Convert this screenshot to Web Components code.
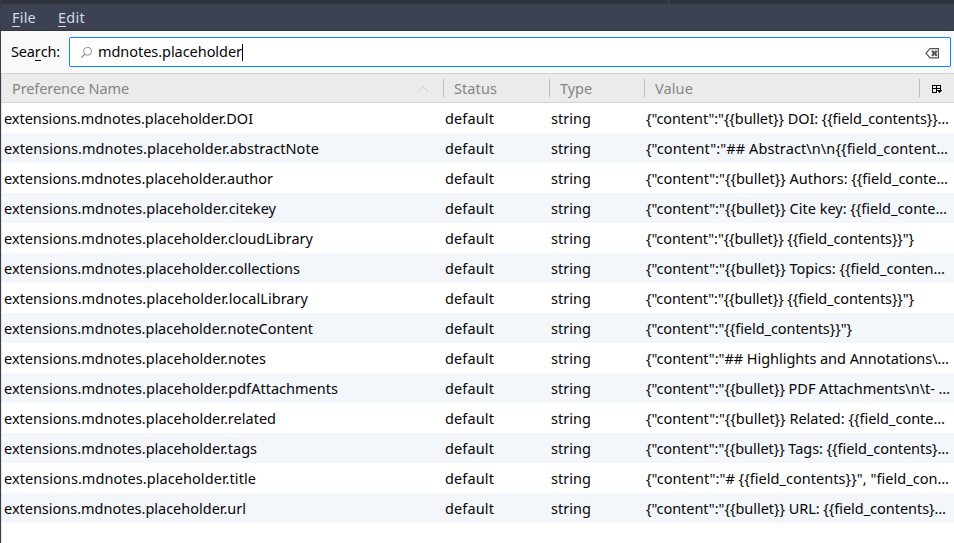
<!DOCTYPE html>
<html lang="en"><head><meta charset="utf-8"><title>Preferences</title>
<style>
html,body{margin:0;height:100%;overflow:hidden;background:#fff}
body{font:14.5px/30px "Noto Sans","Open Sans",sans-serif;color:#050505}
</style></head><body>
<config-window></config-window>
<script>
// Text run whose letter spacing is adjusted so that it spans the given width.
customElements.define('fit-text', class extends HTMLElement {
  connectedCallback() {
    const root = this.attachShadow({mode: 'open'});
    root.innerHTML = `<style>:host{display:block;white-space:pre;overflow:visible}span{display:inline-block}</style><span><slot></slot></span>`;
    const span = root.querySelector('span');
    const want = +this.getAttribute('width');
    const spacing = (want - span.getBoundingClientRect().width) / this.textContent.length;
    span.style.letterSpacing = spacing + 'px';
  }
});

customElements.define('menu-bar', class extends HTMLElement {
  connectedCallback() {
    this.attachShadow({mode: 'open'}).innerHTML = `<style>
      :host{display:flex;box-sizing:border-box;height:31px;border-top:4px solid #2f343f;border-bottom:1px solid #343947;background:#3c4252;color:#d3dae3;padding-left:11px;gap:22px;line-height:27px;position:relative}
      u{text-decoration:none;box-shadow:0 1px #d3dae3;display:inline-block;line-height:17px}
      i{position:absolute;left:667px;top:-4px;width:1px;height:4px;background:#454b59}
      </style><i></i><fit-text width="24"><u>F</u>ile</fit-text><fit-text width="27"><u>E</u>dit</fit-text>`;
  }
});

customElements.define('search-bar', class extends HTMLElement {
  connectedCallback() {
    this.attachShadow({mode: 'open'}).innerHTML = `<style>
      :host{display:flex;box-sizing:border-box;height:42px;padding:6px 3px 6px 10px;background:#f9f9fa;color:#050505;line-height:28px}
      u{text-decoration:none;box-shadow:0 1px #101010;display:inline-block;line-height:17px}
      .label{width:58px}
      .box{flex:1;display:flex;align-items:center;box-sizing:border-box;height:30px;border:1px solid #0a84ff;border-radius:2px;background:#fff;line-height:26px;padding:0 10px 0 10px}
      .box fit-text{height:28px}
      .find{margin-right:5px}
      .caret{width:1px;height:17px;background:#000}
      .clear{margin-left:auto;position:relative;top:1px}
      svg{display:block;flex:none}
      </style><fit-text class="label" width="49">Sea<u>r</u>ch:</fit-text>
      <div class="box"><svg class="find" width="13" height="13" viewBox="0 0 13 13" fill="none" stroke="#8b8b8b"><circle cx="7.6" cy="5.3" r="4" stroke-width="1"/><path d="M4.7 8.2 1.3 11.6" stroke-width="1.3"/></svg>
      <fit-text width="144">mdnotes.placeholder</fit-text><span class="caret"></span>
      <svg class="clear" width="15" height="11" viewBox="0 0 15 11" fill="none" stroke="#555"><path d="M5 .7h8.4v9.2H5L1 5.3z" stroke-width="1.2"/><path d="m7 2.9 4.8 4.8m0-4.8L7 7.7" stroke-width="2.2"/></svg></div>`;
  }
});

customElements.define('tree-header', class extends HTMLElement {
  connectedCallback() {
    this.attachShadow({mode: 'open'}).innerHTML = `<style>
      :host{display:grid;grid-template-columns:441px 106px 95px 275px 1fr;box-sizing:border-box;height:30px;border:solid #d5d5d8;border-width:1px 0 1px 1px;background:#ebebeb;color:#858585;line-height:29px}
      div{display:flex;align-items:center;padding-left:11px;position:relative}
      div:first-of-type{padding-left:10px;padding-right:14px;justify-content:space-between}
      div+div::before{content:"";position:absolute;left:0;top:5px;height:18px;width:1px;background:#bebebe}
      svg{display:block}
      </style>
      <div><fit-text width="117">Preference Name</fit-text><svg width="12" height="8" viewBox="0 0 12 8" fill="none" stroke="#d3dae6" stroke-width="1.7"><path d="M1 6.5 6 1.5l5 5"/></svg></div>
      <div><fit-text width="43">Status</fit-text></div>
      <div><fit-text width="32">Type</fit-text></div>
      <div><fit-text width="38">Value</fit-text></div>
      <div style="padding-left:13px"><svg width="11" height="10" viewBox="0 0 11 10" fill="#000" shape-rendering="crispEdges"><path d="M0 1h9v1H0zM0 2h1v6H0zM4 2h1v6H4zM8 2h1v4H8zM0 4h9v1H0zM0 8h5v1H0zM5 6h5v1H5zM6 7h3v1H6zM7 8h1v1H7z"/></svg></div>`;
  }
});

customElements.define('pref-row', class extends HTMLElement {
  connectedCallback() {
    this.attachShadow({mode: 'open'}).innerHTML = `<style>
      :host{display:grid;grid-template-columns:441px 106px 95px 1fr;height:30px;line-height:31px;overflow:hidden}
      :host([odd]){background:#f3f6fb}
      </style><slot name="name"></slot><fit-text width="49">default</fit-text><fit-text width="40">string</fit-text><slot name="value"></slot>`;
  }
});

const prefs = [
  ['DOI', 249, '{"content":"{{bullet}} DOI: {{field_contents}}…', 303],
  ['abstractNote', 315, '{"content":"## Abstract\\n\\n{{field_content…', 302],
  ['author', 269, '{"content":"{{bullet}} Authors: {{field_conte…', 302],
  ['citekey', 272, '{"content":"{{bullet}} Cite key: {{field_conte…', 301],
  ['cloudLibrary', 309, '{"content":"{{bullet}} {{field_contents}}"}', 268],
  ['collections', 296, '{"content":"{{bullet}} Topics: {{field_conten…', 299],
  ['localLibrary', 304, '{"content":"{{bullet}} {{field_contents}}"}', 268],
  ['noteContent', 309, '{"content":"{{field_contents}}"}', 206],
  ['notes', 262, '{"content":"## Highlights and Annotations\\…', 303],
  ['pdfAttachments', 334, '{"content":"{{bullet}} PDF Attachments\\n\\t- …', 304],
  ['related', 272, '{"content":"{{bullet}} Related: {{field_conte…', 299],
  ['tags', 253, '{"content":"{{bullet}} Tags: {{field_contents}…', 303],
  ['title', 252, '{"content":"# {{field_contents}}", "field_con…', 303],
  ['url', 242, '{"content":"{{bullet}} URL: {{field_contents}…', 300]
];

customElements.define('config-window', class extends HTMLElement {
  connectedCallback() {
    this.attachShadow({mode: 'open'}).innerHTML = `<style>
      :host{display:block;box-sizing:border-box;width:954px;height:543px;border-left:1px solid #383e4e;background:#fff}
      .rows{border-left:1px solid #e4e4e8;height:440px}
      .rows pref-row{padding-left:2px}
      </style><menu-bar></menu-bar><search-bar></search-bar><tree-header></tree-header>
      <div class="rows">${prefs.map(([n, w, v, vw], i) => `<pref-row ${i % 2 ? 'odd' : ''}><fit-text slot="name" width="${w}">extensions.mdnotes.placeholder.${n}</fit-text><fit-text slot="value" width="${vw}">${v}</fit-text></pref-row>`).join('')}</div>`;
  }
});
</script></body></html>
